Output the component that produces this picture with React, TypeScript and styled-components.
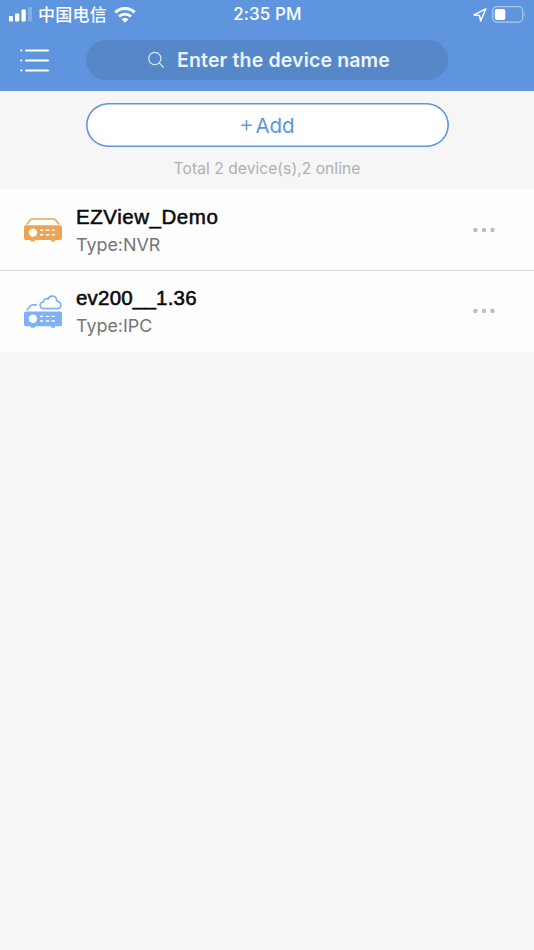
import React from "react";
import styled, { createGlobalStyle } from "styled-components";

const GlobalStyle = createGlobalStyle`
  * { box-sizing: border-box; }
  body { margin: 0; background: #f6f6f6; font-family: Inter, "Noto Sans CJK SC", sans-serif; }
`;

const Screen = styled.main`
  display: flex;
  flex-direction: column;
  min-height: 950px;
  background: #f6f6f6;
`;

const Header = styled.header`
  height: 91px;
  background: #5e95de;
  color: #fff;
`;

const StatusBar = styled.div`
  display: grid;
  grid-template-columns: 1fr auto 1fr;
  align-items: center;
  height: 29px;
  padding: 0 8px 0 9px;
`;

const StatusGroup = styled.div<{ $end?: boolean }>`
  display: flex;
  align-items: center;
  justify-content: ${(p) => (p.$end ? "flex-end" : "flex-start")};
  gap: ${(p) => (p.$end ? "5px" : "7px")};
  svg { display: block; flex: none; }
`;

const Carrier = styled.span`
  margin-left: -1px;
  font: 500 17px/27px "Noto Sans CJK SC", sans-serif;
  letter-spacing: 0.25px;
  height: 29px;
`;

const Clock = styled.time`
  font-size: 17px;
  line-height: 29px;
  font-weight: 500;
  letter-spacing: 0.1px;
`;

const NavBar = styled.div`
  display: flex;
  align-items: center;
  height: 62px;
  padding-left: 20px;
`;

const MenuButton = styled.button`
  width: 66px;
  height: 40px;
  padding: 0;
  border: 0;
  background: none;
  svg { display: block; }
`;

const SearchBox = styled.div`
  display: flex;
  align-items: center;
  justify-content: flex-start;
  gap: 12px;
  width: 362px;
  height: 40px;
  padding-left: 61px;
  border-radius: 20px;
  background: #5688c9;
`;

const SearchLabel = styled.span`
  color: #edf3fc;
  font-size: 19.5px;
  line-height: 40px;
  font-weight: 600;
  letter-spacing: 0.15px;
  white-space: nowrap;
`;

const Actions = styled.section`
  display: flex;
  flex-direction: column;
  align-items: center;
  height: 98px;
  padding-top: 12px;
`;

const AddButton = styled.button`
  display: flex;
  align-items: center;
  justify-content: center;
  gap: 3px;
  width: 363px;
  height: 44px;
  padding: 1px 0 0 2px;
  border: 0;
  box-shadow: inset 0 0 0 1.6px #5e95de;
  border-radius: 22px;
  background: #fff;
  color: #5e95de;
  font: 400 20.5px/40px Inter, sans-serif;
`;

const Summary = styled.p`
  margin: 11px 0 0;
  color: #b0b0b0;
  font-size: 15.6px;
  line-height: 22px;
  letter-spacing: 0.05px;
`;

const DeviceList = styled.ul`
  margin: 0;
  padding: 0;
  list-style: none;
  background: #fefefe;
`;

const DeviceRow = styled.li`
  display: flex;
  align-items: center;
  height: 81px;
  padding: 1px 39px 0 24px;
  & + & {
    height: 82px;
    padding-top: 0;
    padding-bottom: 1px;
    border-top: 1px solid #d6d6d6;
  }
`;

const DeviceText = styled.div`
  flex: 1;
  padding: 1px 0 0 14px;
`;

const DeviceName = styled.div<{ $spacing: number }>`
  color: #0a0a0a;
  font: 400 20.5px/28px "Liberation Sans", sans-serif;
  -webkit-text-stroke: 0.55px #0a0a0a;
  letter-spacing: ${(p) => p.$spacing}px;
`;

const DeviceType = styled.div`
  color: #757575;
  font-size: 17.9px;
  line-height: 28px;
`;

const MoreButton = styled.button`
  padding: 0;
  border: 0;
  background: none;
  svg { display: block; }
`;

const SignalIcon = () => (
  <svg width="23" height="15" viewBox="0 0 23 15" fill="#fff">
    <rect x="0" y="9" width="4" height="5.5" rx="1" />
    <rect x="6" y="6.5" width="4.3" height="8" rx="1" />
    <rect x="12.5" y="2.5" width="4.3" height="12" rx="1" />
    <rect x="19" y="0" width="4" height="14.5" rx="1" opacity=".25" />
  </svg>
);

const WifiIcon = () => (
  <svg width="22" height="16" viewBox="0 0 22 16" fill="none" stroke="#fff" strokeWidth="3">
    <path d="M1.3 5.4a14 14 0 0 1 19.4 0" />
    <path d="M5 9.5a8.6 8.6 0 0 1 12 0" strokeWidth="2.8" />
    <path d="M11 15.7 7.6 12.3a4.9 4.9 0 0 1 6.8 0Z" fill="#fff" stroke="none" />
  </svg>
);

const LocationIcon = () => (
  <svg width="14" height="14" viewBox="0 0 14 14" fill="none" stroke="#fff" strokeWidth="1.5" strokeLinejoin="round">
    <path d="M12.8.9 1 6.9l5.4.5 1.3 5.6Z" />
  </svg>
);

const BatteryIcon = () => (
  <svg width="34" height="17" viewBox="0 0 34 17">
    <rect x=".7" y=".7" width="30" height="15.4" rx="4" fill="none" stroke="#fff" strokeOpacity=".5" strokeWidth="1.2" />
    <rect x="2.8" y="2.9" width="10.5" height="11" rx="2" fill="#fff" />
    <path d="M32.4 5.8q1.6 2.6 0 5.2Z" fill="#fff" opacity=".5" />
  </svg>
);

const MenuIcon = () => (
  <svg width="30" height="40" viewBox="0 0 30 40" stroke="#fff" strokeWidth="2" strokeLinecap="round">
    {[10.5, 20.5, 30.5].map((y) => (
      <React.Fragment key={y}>
        <path d={`M1.2 ${y}h.1`} />
        <path d={`M6 ${y}h22`} />
      </React.Fragment>
    ))}
  </svg>
);

const SearchIcon = () => (
  <svg width="18" height="18" viewBox="0 0 18 18" fill="none" stroke="#dce8f8" strokeWidth="1.2" strokeLinecap="round">
    <circle cx="7.8" cy="7.5" r="6.1" />
    <path d="m12.3 12 4.2 4.3" />
  </svg>
);

const PlusIcon = () => (
  <svg width="11" height="11" viewBox="0 0 11 11" stroke="currentColor" strokeWidth="1.5">
    <path d="M.3 5.2h10.4M5.5 0v10.4" />
  </svg>
);

const MoreIcon = () => (
  <svg width="22" height="6" viewBox="0 0 22 6" fill="#bdbdbd">
    <circle cx="2.4" cy="3" r="2.2" />
    <circle cx="11" cy="3" r="2.2" />
    <circle cx="19.5" cy="3" r="2.2" />
  </svg>
);

const RecorderBody = ({ y, color }: { y: number; color: string }) => (
  <g transform={`translate(0 ${y})`}>
    <path
      fill={color}
      d="M1.8 0h34.4Q38 0 38 1.8v11.1q0 1.8-1.8 1.8h-5v.8q0 .8-.8.8h-2.6q-.8 0-.8-.8v-.8H11v.8q0 .8-.8.8H7.4q-.8 0-.8-.8v-.8H1.8Q0 14.7 0 12.9V1.8Q0 0 1.8 0Z"
    />
    <circle cx="9" cy="7.3" r="4.2" fill="#fff" />
    <path d="M16 4.9h3.2M21.9 4.9h3.2M27.6 4.9h3.2M16 9.5h3.2M21.9 9.5h3.2M27.6 9.5h3.2" stroke="#fff" strokeWidth="1.4" />
  </g>
);

const RecorderIcon = () => (
  <svg width="38" height="24" viewBox="0 0 38 24" fill="none">
    <path
      d="M3 6 6.2 2.2Q7.2 1 8.7 1h20.4q1.6 0 2.6 1.2L34.9 6"
      stroke="#f0a452"
      strokeWidth="1.6"
      strokeLinecap="round"
    />
    <RecorderBody y={7.3} color="#f0a452" />
  </svg>
);

const CloudRecorderIcon = () => (
  <svg width="38" height="33" viewBox="0 0 38 33" fill="none">
    <g stroke="#7fb1f8" strokeWidth="1.7" strokeLinecap="round" strokeLinejoin="round">
      <path d="M3.2 14.8 6.1 11.2Q7.2 9.9 8.8 9.9h3.5" />
      <path d="M20 13.6C15 13.6 14.8 7 19.6 6.8 19.6 4 22.4 3 24 4.2 25.5-.4 33 .2 32.6 5.8 38.2 7 38 13.6 33.2 13.6Z" />
    </g>
    <RecorderBody y={16.5} color="#7fb1f8" />
  </svg>
);

const devices = [
  { name: "EZView_Demo", type: "NVR", cloud: false, spacing: 0.55 },
  { name: "ev200__1.36", type: "IPC", cloud: true, spacing: 0.2 },
];

export default function App() {
  return (
    <>
      <GlobalStyle />
      <Screen>
        <Header>
          <StatusBar>
            <StatusGroup>
              <SignalIcon />
              <Carrier>中国电信</Carrier>
              <WifiIcon />
            </StatusGroup>
            <Clock>2:35 PM</Clock>
            <StatusGroup $end>
              <LocationIcon />
              <BatteryIcon />
            </StatusGroup>
          </StatusBar>
          <NavBar>
            <MenuButton aria-label="Menu">
              <MenuIcon />
            </MenuButton>
            <SearchBox>
              <SearchIcon />
              <SearchLabel>Enter the device name</SearchLabel>
            </SearchBox>
          </NavBar>
        </Header>
        <Actions>
          <AddButton>
            <PlusIcon />
            <span>Add</span>
          </AddButton>
          <Summary>Total 2 device(s),2 online</Summary>
        </Actions>
        <DeviceList>
          {devices.map((d) => (
            <DeviceRow key={d.name}>
              {d.cloud ? <CloudRecorderIcon /> : <RecorderIcon />}
              <DeviceText>
                <DeviceName $spacing={d.spacing}>{d.name}</DeviceName>
                <DeviceType>Type:{d.type}</DeviceType>
              </DeviceText>
              <MoreButton aria-label="More">
                <MoreIcon />
              </MoreButton>
            </DeviceRow>
          ))}
        </DeviceList>
      </Screen>
    </>
  );
}
